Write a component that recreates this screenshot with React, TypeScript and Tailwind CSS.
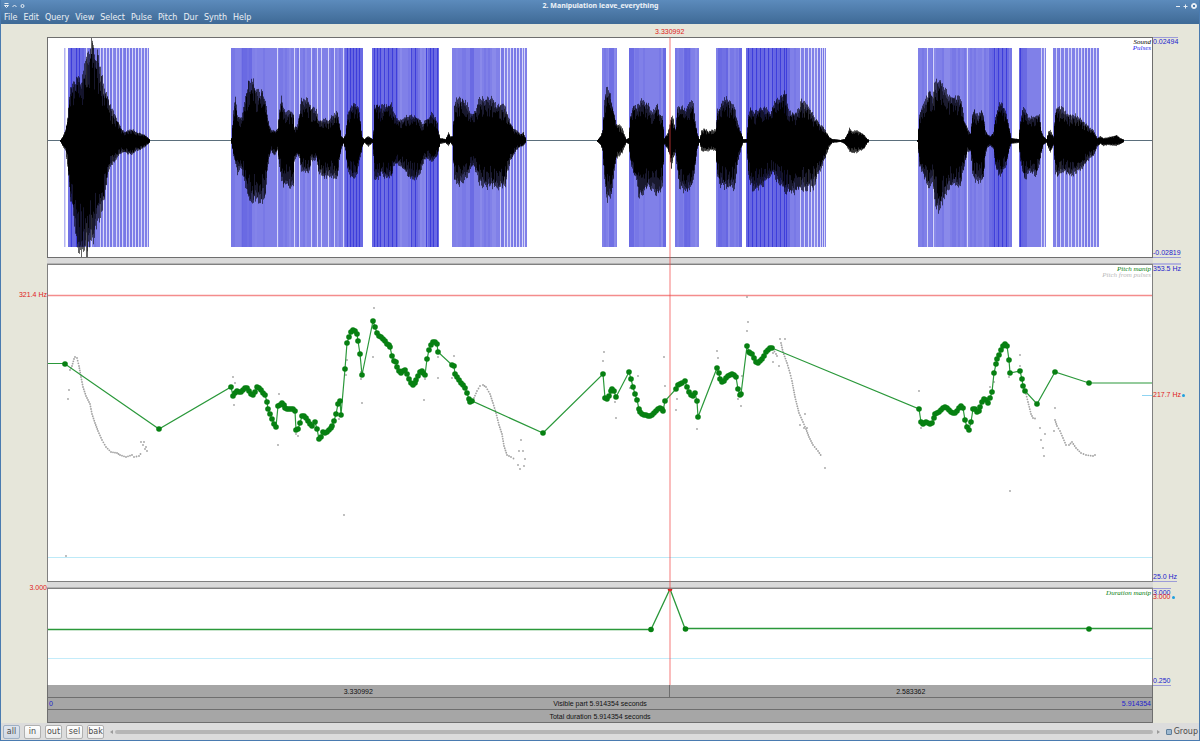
import { useState } from 'react'

type Point = [number, number]
type Span = [number, number]

const AXIS_Y = 140
const MENUS = ['File', 'Edit', 'Query', 'View', 'Select', 'Pulse', 'Pitch', 'Dur', 'Synth', 'Help']
const ZOOM_BUTTONS = ['all', 'in', 'out', 'sel', 'bak']

// Waveform envelopes: x, top, bottom
const ENVELOPES: number[][] = [
  [
    60, 140, 141, 62, 137, 145, 65, 130, 150, 67, 118, 165, 69, 97, 190, 70, 87, 200, 73, 84, 215, 75, 82, 235, 77, 75, 250,
    79, 80, 254, 81, 82, 255, 84, 66, 255, 86, 55, 256, 88, 50, 250, 90, 42, 240, 92, 38, 238, 93, 42, 242, 95, 55, 232,
    97, 52, 222, 99, 65, 218, 101, 70, 212, 103, 85, 205, 106, 92, 188, 108, 98, 172, 110, 105, 168, 112, 110, 164,
    115, 115, 160, 118, 122, 155, 121, 128, 152, 124, 132, 152, 128, 130, 153, 132, 129, 154, 136, 132, 150, 140, 133, 149,
    143, 134, 147, 147, 137, 144, 150, 140, 141,
  ],
  [
    231, 138, 143, 233, 110, 155, 235, 95, 165, 237, 115, 173, 239, 117, 168, 241, 116, 170, 243, 108, 176, 246, 90, 190,
    248, 79, 200, 252, 79, 201, 254, 83, 201, 256, 88, 200, 258, 90, 200, 260, 94, 200, 262, 89, 200, 264, 95, 198,
    265, 100, 195, 267, 115, 170, 269, 125, 156, 271, 130, 150, 273, 130, 154, 275, 131, 153, 277, 128, 150, 279, 110, 165,
    281, 97, 180, 283, 108, 185, 286, 111, 184, 290, 110, 186, 293, 113, 184, 294, 127, 160, 297, 125, 154, 299, 112, 158,
    301, 98, 170, 304, 98, 172, 307, 98, 173, 309, 101, 172, 311, 108, 160, 314, 106, 160, 316, 110, 158, 318, 119, 172,
    322, 119, 175, 325, 118, 178, 328, 120, 175, 331, 115, 176, 334, 113, 176, 337, 110, 178, 339, 122, 160, 341, 136, 148,
    343, 138, 143, 345, 134, 150, 347, 115, 170, 350, 106, 176, 353, 103, 177, 357, 104, 175, 359, 112, 160, 361, 130, 152,
    362, 137, 146, 364, 139, 142, 366, 137, 144, 368, 136, 146, 371, 138, 143, 372, 139, 142, 373, 130, 155, 374, 105, 177,
    378, 104, 178, 381, 106, 174, 384, 105, 176, 388, 104, 179, 391, 103, 178, 393, 112, 165, 396, 117, 164, 400, 120, 165,
    404, 117, 170, 408, 115, 177, 412, 115, 178, 416, 116, 179, 420, 120, 172, 422, 124, 165, 425, 120, 158, 428, 117, 158,
    431, 113, 161, 434, 116, 159, 437, 122, 154, 438, 130, 150, 440, 138, 143, 445, 139, 142, 448, 132, 145, 450, 136, 142,
    452, 136, 145, 454, 104, 180, 456, 98, 184, 459, 98, 184, 462, 98, 182, 465, 100, 178, 467, 104, 176, 470, 112, 168,
    473, 112, 165, 476, 107, 172, 479, 96, 183, 482, 98, 185, 486, 97, 187, 490, 96, 187, 494, 99, 185, 496, 104, 190,
    498, 104, 187, 502, 103, 186, 505, 107, 184, 507, 112, 172, 510, 122, 160, 513, 128, 155, 516, 130, 149, 520, 134, 146,
    523, 132, 145, 526, 140, 141,
  ],
  [
    597, 140, 141, 600, 136, 144, 602, 130, 150, 604, 100, 180, 606, 87, 198, 608, 88, 200, 610, 94, 198, 612, 104, 188,
    614, 115, 170, 616, 124, 158, 619, 125, 155, 622, 128, 152, 624, 134, 147, 626, 139, 142, 628, 138, 143, 630, 115, 160,
    633, 103, 175, 636, 107, 178, 638, 104, 195, 642, 98, 194, 645, 103, 190, 648, 102, 188, 651, 112, 190, 654, 107, 192,
    657, 103, 195, 659, 112, 193, 662, 116, 185, 664, 138, 144, 667, 133, 148, 669, 125, 155, 671, 115, 170, 673, 118, 158,
    675, 128, 152, 677, 107, 172, 679, 106, 187, 682, 106, 190, 685, 110, 191, 688, 104, 192, 691, 99, 186, 693, 103, 180,
    695, 120, 165, 697, 133, 148, 699, 139, 142, 701, 130, 150, 704, 128, 151, 708, 131, 150, 711, 130, 149, 715, 129, 150,
    717, 110, 175, 719, 107, 185, 723, 98, 187, 727, 98, 188, 730, 101, 187, 734, 106, 188, 737, 120, 165, 739, 128, 155,
    741, 133, 147, 743, 139, 142, 746, 139, 142, 748, 115, 175, 750, 107, 185, 753, 112, 190, 757, 110, 188, 762, 107, 185,
    767, 109, 180, 770, 112, 175, 773, 104, 172, 776, 100, 180, 779, 98, 183, 782, 96, 187, 784, 90, 190, 786, 96, 193,
    788, 110, 192, 791, 112, 194, 795, 112, 192, 799, 108, 188, 801, 98, 187, 805, 102, 190, 809, 107, 188, 812, 112, 190,
    814, 118, 185, 817, 120, 176, 820, 125, 170, 823, 127, 162, 826, 132, 154, 829, 137, 146, 832, 139, 142, 840, 140, 141,
    844, 139, 143, 847, 133, 147, 849, 128, 151, 852, 131, 152, 856, 130, 152, 860, 132, 150, 864, 135, 148, 867, 139, 142,
    869, 140, 141,
  ],
  [
    917, 140, 141, 919, 115, 165, 922, 103, 172, 925, 100, 180, 929, 88, 190, 932, 95, 182, 934, 84, 200, 937, 78, 210,
    940, 78, 210, 943, 85, 200, 947, 92, 190, 950, 95, 187, 955, 96, 184, 960, 97, 185, 962, 106, 175, 964, 120, 165,
    967, 128, 152, 970, 133, 150, 972, 115, 172, 974, 109, 180, 978, 116, 181, 981, 109, 180, 983, 113, 179, 985, 130, 155,
    987, 134, 147, 990, 136, 145, 993, 132, 148, 995, 117, 165, 998, 106, 174, 1000, 102, 175, 1003, 106, 170,
    1006, 114, 165, 1009, 128, 148, 1011, 138, 143, 1018, 139, 142, 1020, 120, 160, 1022, 108, 172, 1025, 109, 180,
    1028, 117, 172, 1032, 116, 173, 1036, 115, 175, 1039, 114, 165, 1041, 130, 152, 1043, 136, 144, 1046, 139, 142,
    1048, 131, 148, 1050, 130, 152, 1053, 136, 145, 1055, 110, 172, 1057, 106, 176, 1061, 107, 174, 1065, 111, 172,
    1069, 114, 174, 1073, 114, 174, 1077, 115, 172, 1081, 119, 168, 1085, 123, 163, 1089, 127, 158, 1093, 130, 156,
    1097, 138, 146, 1100, 136, 143, 1103, 138, 145, 1108, 137, 144, 1112, 136, 145, 1116, 135, 145, 1120, 138, 143,
    1124, 140, 141,
  ],
]

const PULSE_BLOCKS: Span[] = [
  [68, 149], [231, 363], [372, 439], [452, 527], [602, 617], [629, 666],
  [675, 699], [716, 742], [746, 826], [918, 1012], [1019, 1046], [1053, 1099],
]

// Denser glottal pulses read as a darker blue
const DARK_RANGES: Span[] = [
  [68, 84], [242, 252], [345, 363], [372, 398], [412, 418], [428, 439], [470, 474], [609, 614],
  [629, 634], [663, 666], [684, 690], [718, 728], [739, 742], [746, 790], [989, 1009], [1019, 1027],
]
const DARK_LINES = [
  71, 76, 79, 347, 350, 353, 356, 359, 374, 377, 380, 384, 388, 392, 396, 411, 415, 426, 430, 433, 437,
  748, 752, 756, 760, 764, 768, 772, 776, 780, 784, 786, 994, 998, 1002, 1006, 1020,
]
const LIGHT_LINES = [
  86, 91, 100, 103, 106, 109, 112, 116, 119, 122, 126, 129, 132, 135, 138, 141, 144, 147,
  277, 294, 299, 311, 317, 321, 328, 334, 343, 500, 504, 507, 510, 513, 516, 519, 522, 524,
  800, 804, 808, 811, 814, 817, 820, 822, 824, 927, 933, 967, 1041, 1044,
  1056, 1060, 1064, 1068, 1071, 1075, 1078, 1081, 1084, 1087, 1090, 1093, 1096,
]

const PITCH_POINTS: Point[] = [
  [65, 364], [159, 429], [231, 387], [233, 396], [235, 393], [237, 391], [239, 392], [241, 392], [243, 390], [245, 388],
  [247, 388], [249, 391], [251, 394], [253, 395], [255, 392], [257, 387], [259, 388], [261, 390], [263, 393], [265, 395],
  [267, 402], [268, 409], [270, 414], [272, 419], [274, 424], [276, 427], [278, 406], [280, 405], [282, 403], [284, 405],
  [285, 408], [287, 409], [289, 409], [291, 409], [293, 409], [295, 411], [296, 430], [298, 429], [300, 423], [302, 416],
  [304, 416], [306, 418], [308, 421], [310, 424], [312, 426], [315, 422], [317, 429], [319, 439], [321, 437], [323, 432],
  [325, 433], [327, 432], [329, 430], [331, 428], [332, 426], [334, 421], [336, 414], [338, 404], [340, 401], [341, 415],
  [345, 369], [347, 343], [349, 337], [351, 332], [353, 330], [355, 331], [357, 334], [358, 341], [360, 354], [362, 375],
  [373, 321], [375, 327], [377, 333], [379, 336], [381, 337], [383, 339], [385, 341], [387, 344], [389, 345], [390, 347],
  [392, 356], [394, 361], [396, 362], [397, 367], [399, 371], [401, 373], [403, 371], [405, 370], [407, 374], [409, 379],
  [411, 383], [413, 385], [415, 383], [416, 380], [418, 376], [420, 372], [422, 371], [423, 373], [425, 375], [427, 359],
  [429, 350], [431, 345], [433, 342], [435, 342], [437, 344], [438, 352], [452, 365], [454, 366], [455, 374], [457, 377],
  [459, 380], [461, 383], [463, 385], [465, 388], [467, 393], [469, 399], [470, 402], [472, 401], [543, 433], [603, 374],
  [605, 398], [607, 399], [609, 396], [611, 391], [612, 389], [614, 391], [616, 397], [629, 372], [631, 379], [633, 387],
  [635, 394], [637, 400], [639, 409], [640, 412], [642, 414], [644, 415], [646, 415], [648, 416], [650, 416], [652, 415],
  [654, 413], [656, 411], [658, 409], [660, 408], [662, 409], [663, 411], [665, 401], [676, 389], [678, 385], [680, 384],
  [682, 383], [685, 381], [687, 387], [689, 392], [691, 395], [693, 396], [695, 393], [697, 401], [698, 417], [717, 368],
  [719, 373], [720, 379], [722, 382], [724, 381], [726, 378], [728, 376], [730, 375], [732, 374], [734, 375], [736, 377],
  [738, 389], [740, 395], [741, 394], [747, 346], [749, 352], [750, 353], [752, 354], [754, 358], [756, 362], [758, 363],
  [760, 361], [762, 359], [764, 356], [766, 352], [768, 350], [770, 348], [772, 348], [919, 409], [921, 422], [923, 424],
  [924, 423], [926, 422], [928, 423], [930, 424], [932, 423], [934, 418], [935, 414], [937, 413], [939, 412], [941, 410],
  [943, 408], [945, 407], [947, 408], [949, 410], [951, 412], [953, 413], [955, 413], [957, 411], [959, 408], [961, 406],
  [963, 408], [965, 420], [967, 427], [969, 430], [971, 422], [973, 409], [975, 409], [977, 412], [979, 411], [980, 407],
  [982, 402], [984, 399], [986, 400], [988, 403], [990, 398], [992, 392], [994, 373], [996, 364], [997, 359], [999, 355],
  [1001, 350], [1003, 346], [1005, 344], [1007, 346], [1009, 360], [1010, 373], [1020, 371], [1022, 379], [1023, 386],
  [1025, 391], [1037, 404], [1055, 372], [1089, 383],
]

// Smooth stretches of the measured pitch, filled in between these points
const TRAILS: Point[][] = [
  [[70, 370], [72, 366], [74, 359], [75, 357], [77, 358], [79, 366], [81, 377], [83, 387], [86, 396], [90, 404], [92, 414], [95, 423], [98, 431], [102, 440], [106, 447], [111, 452], [117, 453], [120, 455], [126, 457], [132, 455], [134, 457], [139, 456], [142, 452]],
  [[474, 398], [477, 391], [480, 386], [483, 385], [486, 387], [490, 394], [493, 403], [496, 413], [499, 425], [502, 434], [504, 446], [507, 455], [511, 457], [516, 460]],
  [[773, 349], [776, 354], [778, 358]],
  [[781, 343], [783, 352], [787, 363], [790, 373], [792, 381], [795, 397], [799, 413], [803, 422], [806, 429], [809, 437], [813, 445], [818, 451], [822, 457]],
  [[1026, 394], [1028, 402], [1031, 414], [1033, 418], [1037, 419]],
  [[1055, 420], [1057, 426], [1060, 431], [1063, 438], [1066, 445], [1069, 445], [1072, 442], [1076, 448], [1081, 453], [1086, 455], [1093, 456], [1097, 454]],
]

const STRAY_DOTS: Point[] = [
  [68, 399], [69, 390], [66, 556], [141, 442], [144, 442], [143, 445], [146, 447], [145, 449], [147, 451],
  [233, 377], [235, 383], [234, 405], [278, 445], [279, 394], [296, 434], [298, 436], [339, 419], [347, 360], [346, 375],
  [361, 372], [361, 379], [362, 403], [373, 357], [374, 308], [344, 515], [424, 400], [425, 379], [438, 357], [438, 378],
  [454, 356], [452, 378], [521, 440], [519, 451], [523, 451], [525, 459], [518, 465], [524, 466], [520, 469],
  [603, 361], [604, 352], [615, 402], [616, 418], [638, 376], [630, 388], [664, 357], [665, 386], [676, 410], [677, 399],
  [697, 429], [717, 351], [718, 358], [738, 399], [741, 406], [742, 376], [747, 297], [748, 322], [747, 331],
  [773, 353], [773, 362], [779, 366], [780, 339], [785, 339], [800, 425], [805, 414], [807, 428], [804, 428], [825, 468],
  [919, 391], [921, 428], [990, 387], [994, 382], [1009, 377], [1010, 491], [1020, 355], [1020, 366],
  [1040, 428], [1041, 440], [1043, 448], [1044, 456], [1045, 434], [1055, 408], [1054, 431],
]

function noise(n: number) {
  const v = Math.sin(n * 12.9898) * 43758.5453
  return v - Math.floor(v)
}

function waveColumns(env: number[], scale: number, jitter: number, seed: number) {
  let d = ''
  for (let i = 0; i + 5 < env.length; i += 3) {
    const [x0, top0, bottom0, x1, top1, bottom1] = env.slice(i, i + 6)
    for (let x = x0; x < x1; x++) {
      const t = (x - x0) / (x1 - x0)
      const up = AXIS_Y - (top0 + (top1 - top0) * t)
      const down = bottom0 + (bottom1 - bottom0) * t - AXIS_Y
      const a = AXIS_Y - up * scale * (1 - noise(x + seed) * jitter)
      const b = AXIS_Y + 1 + down * scale * (1 - noise(x * 3 + seed) * jitter)
      d += `M${x + 0.5} ${a.toFixed(1)}V${b.toFixed(1)}`
    }
  }
  return d
}

// Uneven shading inside the pulse blocks
function pulseShade(seed: number, share: number) {
  let d = ''
  for (const [from, to] of PULSE_BLOCKS) {
    for (let x = from; x + 2 <= to; x += 2) {
      if (noise(x + seed) < share) d += `M${x + 1} 48V247`
    }
  }
  return d
}

function fillTrail(trail: Point[]) {
  const dots: Point[] = []
  for (let i = 0; i < trail.length - 1; i++) {
    const [x0, y0] = trail[i]
    const [x1, y1] = trail[i + 1]
    const steps = Math.max(1, Math.round(Math.hypot(x1 - x0, y1 - y0) / 2.4))
    for (let s = 0; s < steps; s++) {
      dots.push([x0 + ((x1 - x0) * s) / steps, y0 + ((y1 - y0) * s) / steps])
    }
  }
  return dots
}

function SoundChart() {
  return (
    <svg viewBox="48 38 1104 219" preserveAspectRatio="none" className="block h-[219px] w-full">
      <rect x="64" y="48" width="1.5" height="199" fill="#b4b4f2" />
      {PULSE_BLOCKS.map(([from, to]) => (
        <rect key={from} x={from} y="48" width={to - from} height="199" fill="#8080e8" />
      ))}
      <path d={pulseShade(3, 0.4)} stroke="#5c5ce0" strokeWidth="2" strokeOpacity="0.2" />
      <path d={pulseShade(11, 0.25)} stroke="#b4b4f4" strokeWidth="2" strokeOpacity="0.2" />
      {DARK_RANGES.map(([from, to]) => (
        <rect key={from} x={from} y="48" width={to - from} height="199" fill="#5050dd" opacity="0.45" />
      ))}
      {DARK_LINES.map((x) => (
        <rect key={x} x={x} y="48" width="1" height="199" fill="#3030d8" opacity="0.75" />
      ))}
      {LIGHT_LINES.map((x) => (
        <rect key={x} x={x} y="48" width="1" height="199" fill="#e6e6fc" opacity="0.85" />
      ))}
      <path d={`M48 ${AXIS_Y + 0.5}H1152`} stroke="#5b6f7c" />
      {ENVELOPES.map((env) => (
        <g key={env[0]} fill="none" stroke="#000">
          <path d={waveColumns(env, 1.05, 0.14, 0)} strokeOpacity="0.6" />
          <path d={waveColumns(env, 0.98, 0.2, 5)} strokeOpacity="0.5" />
          <path d={waveColumns(env, 0.88, 0.4, 7)} />
        </g>
      ))}
    </svg>
  )
}

function PitchChart() {
  const line = PITCH_POINTS.map(([x, y]) => `L${x} ${y}`).join('')
  const dots = [...TRAILS.flatMap(fillTrail), ...STRAY_DOTS]
  return (
    <svg viewBox="48 265 1104 316" preserveAspectRatio="none" className="block h-[316px] w-full">
      <path d="M48 295.5H1152" stroke="#f48c8c" strokeWidth="1.3" />
      <path d="M48 557.5H1152" stroke="#bdeaf8" />
      <path d="M1142 395.5H1152" stroke="#8fd4f2" />
      {dots.map(([x, y], i) => (
        <circle key={i} cx={x} cy={y} r="0.9" fill="#a2a2a2" />
      ))}
      <path d={`M48 363.5H65${line}H1152`} fill="none" stroke="#2a983a" strokeWidth="1.2" />
      {PITCH_POINTS.map(([x, y]) => (
        <circle key={x} cx={x} cy={y} r="2.8" fill="#078012" />
      ))}
    </svg>
  )
}

function DurationChart() {
  return (
    <svg viewBox="48 589 1104 96" preserveAspectRatio="none" className="block h-[96px] w-full">
      <path d="M48 658.5H1152" stroke="#c4ecfa" />
      <path d="M48 629.5H651L670 589L685 628.5H1152" fill="none" stroke="#2a983a" strokeWidth="1.3" />
      <circle cx="651" cy="629.5" r="2.8" fill="#078012" />
      <circle cx="685.5" cy="629" r="2.8" fill="#078012" />
      <circle cx="1089" cy="629" r="2.8" fill="#078012" />
      <circle cx="670" cy="589" r="2.4" fill="#d01c1c" />
    </svg>
  )
}

function TitleBar() {
  return (
    <header className="h-6 bg-linear-to-b from-[#5c8bbc] to-[#3f6a96] font-['DejaVu_Sans',sans-serif] text-white/90">
      <div className="flex h-[11px] items-center justify-between pr-0.5 pl-[3px]">
        <svg viewBox="0 0 22 8" className="h-2 w-[22px]" fill="none" stroke="#e8eef5">
          <path d="M0.5 1.5H4.5M0.5 3.5L2.5 5.5L4.5 3.5Z" />
          <path d="M8.5 5L10.5 3L12.5 5" />
          <circle cx="18.5" cy="4" r="1.5" />
        </svg>
        <h1 className="font-['Noto_Sans',sans-serif] text-[7px] leading-none font-bold">2. Manipulation leave_everything</h1>
        <svg viewBox="0 0 22 8" className="h-2 w-[22px]" fill="none" stroke="#e8eef5">
          <path d="M1 4.5H5M8.5 4.5H12.5M10.5 2.5V6.5" />
          <circle cx="19" cy="4" r="2.5" fill="#e8eef5" />
          <path d="M18 3L20 5M20 3L18 5" stroke="#4b7aab" />
        </svg>
      </div>
      <nav className="flex h-[13px] items-center gap-1 px-0.5 text-[8px] leading-[9px]">
        {MENUS.map((menu) => (
          <button key={menu} type="button" className="px-px">
            {menu}
          </button>
        ))}
      </nav>
    </header>
  )
}

function LeftScale() {
  return (
    <div className="flex w-[46px] flex-col items-end text-[#e02020]">
      <span className="mt-[267px]">321.4 Hz</span>
      <span className="mt-[285px]">3.000</span>
    </div>
  )
}

function RightScale() {
  return (
    <div className="flex w-[46px] flex-col items-start text-[#2222cc]">
      <span className="mt-[13px] border-t border-[#9c9cd8]">0.02494</span>
      <span className="mt-[203px] border-b border-[#9c9cd8]">-0.02819</span>
      <span className="mt-[5px] border-t-2 border-[#b4b4dc]">353.5 Hz</span>
      <span className="mt-[118px] flex items-center text-[#e02020]">
        217.7 Hz
        <i className="ml-px size-[3px] rounded-full bg-[#1fa0e0]" />
      </span>
      <span className="mt-[174px] border-b border-[#9c9cd8]">25.0 Hz</span>
      <span className="mt-[6px] border-t border-[#9c9cd8]">3.000</span>
      <span className="-mt-1 flex items-center text-[#e02020]">
        3.000
        <i className="ml-px size-[3px] rounded-full bg-[#1fa0e0]" />
      </span>
      <span className="mt-[76px] border-b border-[#9c9cd8]">0.250</span>
    </div>
  )
}

function PanelNames({ children }: { children: React.ReactNode }) {
  return (
    <div className="absolute top-px right-px flex flex-col items-end font-['Liberation_Serif',serif] text-[7px] leading-[6px] italic">
      {children}
    </div>
  )
}

export default function App() {
  const [grouped, setGrouped] = useState(true)

  return (
    <div className="flex min-h-screen flex-col border-x border-b border-[#4a7bb0] bg-[#e6e6da] font-['Liberation_Sans',sans-serif] text-[7px] leading-[8px]">
      <TitleBar />

      <main className="flex flex-1">
        <LeftScale />
        <div className="min-w-0 flex-1">
          <div className="flex h-[13px] items-center pt-0.5">
            <span className="w-[56.3%]" />
            <span className="flex w-0 justify-center text-[#e02020]">3.330992</span>
          </div>

          <div className="relative">
            {/* Sound and pulses */}
            <section className="relative border border-[#6e6e6e] bg-white">
              <SoundChart />
              <PanelNames>
                <span>Sound</span>
                <span className="text-[#2222ee]">Pulses</span>
              </PanelNames>
            </section>
            <div className="h-[6px] border-b border-[#b4b4b4] bg-[#dadada]" />

            {/* Pitch manipulation */}
            <section className="relative border border-[#808080] bg-white">
              <PitchChart />
              <PanelNames>
                <span className="text-[#078012]">Pitch manip</span>
                <span className="text-[#b8b8b8]">Pitch from pulses</span>
              </PanelNames>
            </section>
            <div className="h-[6px] border-b border-[#b4b4b4] bg-[#dadada]" />

            {/* Duration manipulation */}
            <section className="relative border border-b-0 border-[#808080] bg-white">
              <DurationChart />
              <PanelNames>
                <span className="text-[#078012]">Duration manip</span>
              </PanelNames>
            </section>
            <div className="absolute inset-y-0 left-[56.2%] w-0.5 bg-[#f04040]/35" />
          </div>

          {/* Selection, visible part and total duration */}
          <div className="border-x border-[#6e6e6e] bg-[#a6a6a6] text-center text-[#111]">
            <div className="flex h-[13px] border-b border-[#6e6e6e]">
              <button type="button" className="w-[56.3%] border-r border-[#6e6e6e] pt-px">3.330992</button>
              <button type="button" className="flex-1 pt-px">2.583362</button>
            </div>
            <div className="flex h-3 items-center border-b border-[#6e6e6e] pt-px">
              <span className="w-10 pl-px text-left text-[#2222cc]">0</span>
              <button type="button" className="flex-1">Visible part 5.914354 seconds</button>
              <span className="w-10 pr-px text-right text-[#2222cc]">5.914354</span>
            </div>
            <button type="button" className="block h-[13px] w-full border-b border-[#6e6e6e] pt-px">
              Total duration 5.914354 seconds
            </button>
          </div>
        </div>
        <RightScale />
      </main>

      <footer className="flex h-[17px] items-center gap-1 bg-[#dcdcdc] pl-0.5 font-['DejaVu_Sans',sans-serif] text-[8px] text-[#4a4a4a]">
        {ZOOM_BUTTONS.map((label) => (
          <button
            key={label}
            type="button"
            className="h-[14px] w-[17px] overflow-hidden rounded-xs border border-[#b0b0b0] bg-linear-to-b from-white to-[#ececec] leading-[11px] first:border-[#9fb0c4] first:from-[#dfe5ee] first:to-[#d0d8e4]"
          >
            {label}
          </button>
        ))}
        <div className="ml-0.5 flex flex-1 items-center gap-0.5">
          <svg viewBox="0 0 3 4" className="h-1 w-[3px]" fill="#9a9a9a">
            <path d="M3 0V4L0 2Z" />
          </svg>
          <div className="h-1 flex-1 rounded-full bg-[#b6b6b6]" />
          <svg viewBox="0 0 3 4" className="ml-0.5 h-1 w-[3px]" fill="#9a9a9a">
            <path d="M0 0V4L3 2Z" />
          </svg>
        </div>
        <label className="flex items-center gap-0.5 pr-px pl-0.5">
          <input
            type="checkbox"
            checked={grouped}
            onChange={(e) => setGrouped(e.target.checked)}
            className="size-[6px] appearance-none rounded-[1px] border border-[#5f7f9c] bg-[#dce8f2] checked:bg-[#9db8d0]"
          />
          Group
        </label>
      </footer>
    </div>
  )
}
